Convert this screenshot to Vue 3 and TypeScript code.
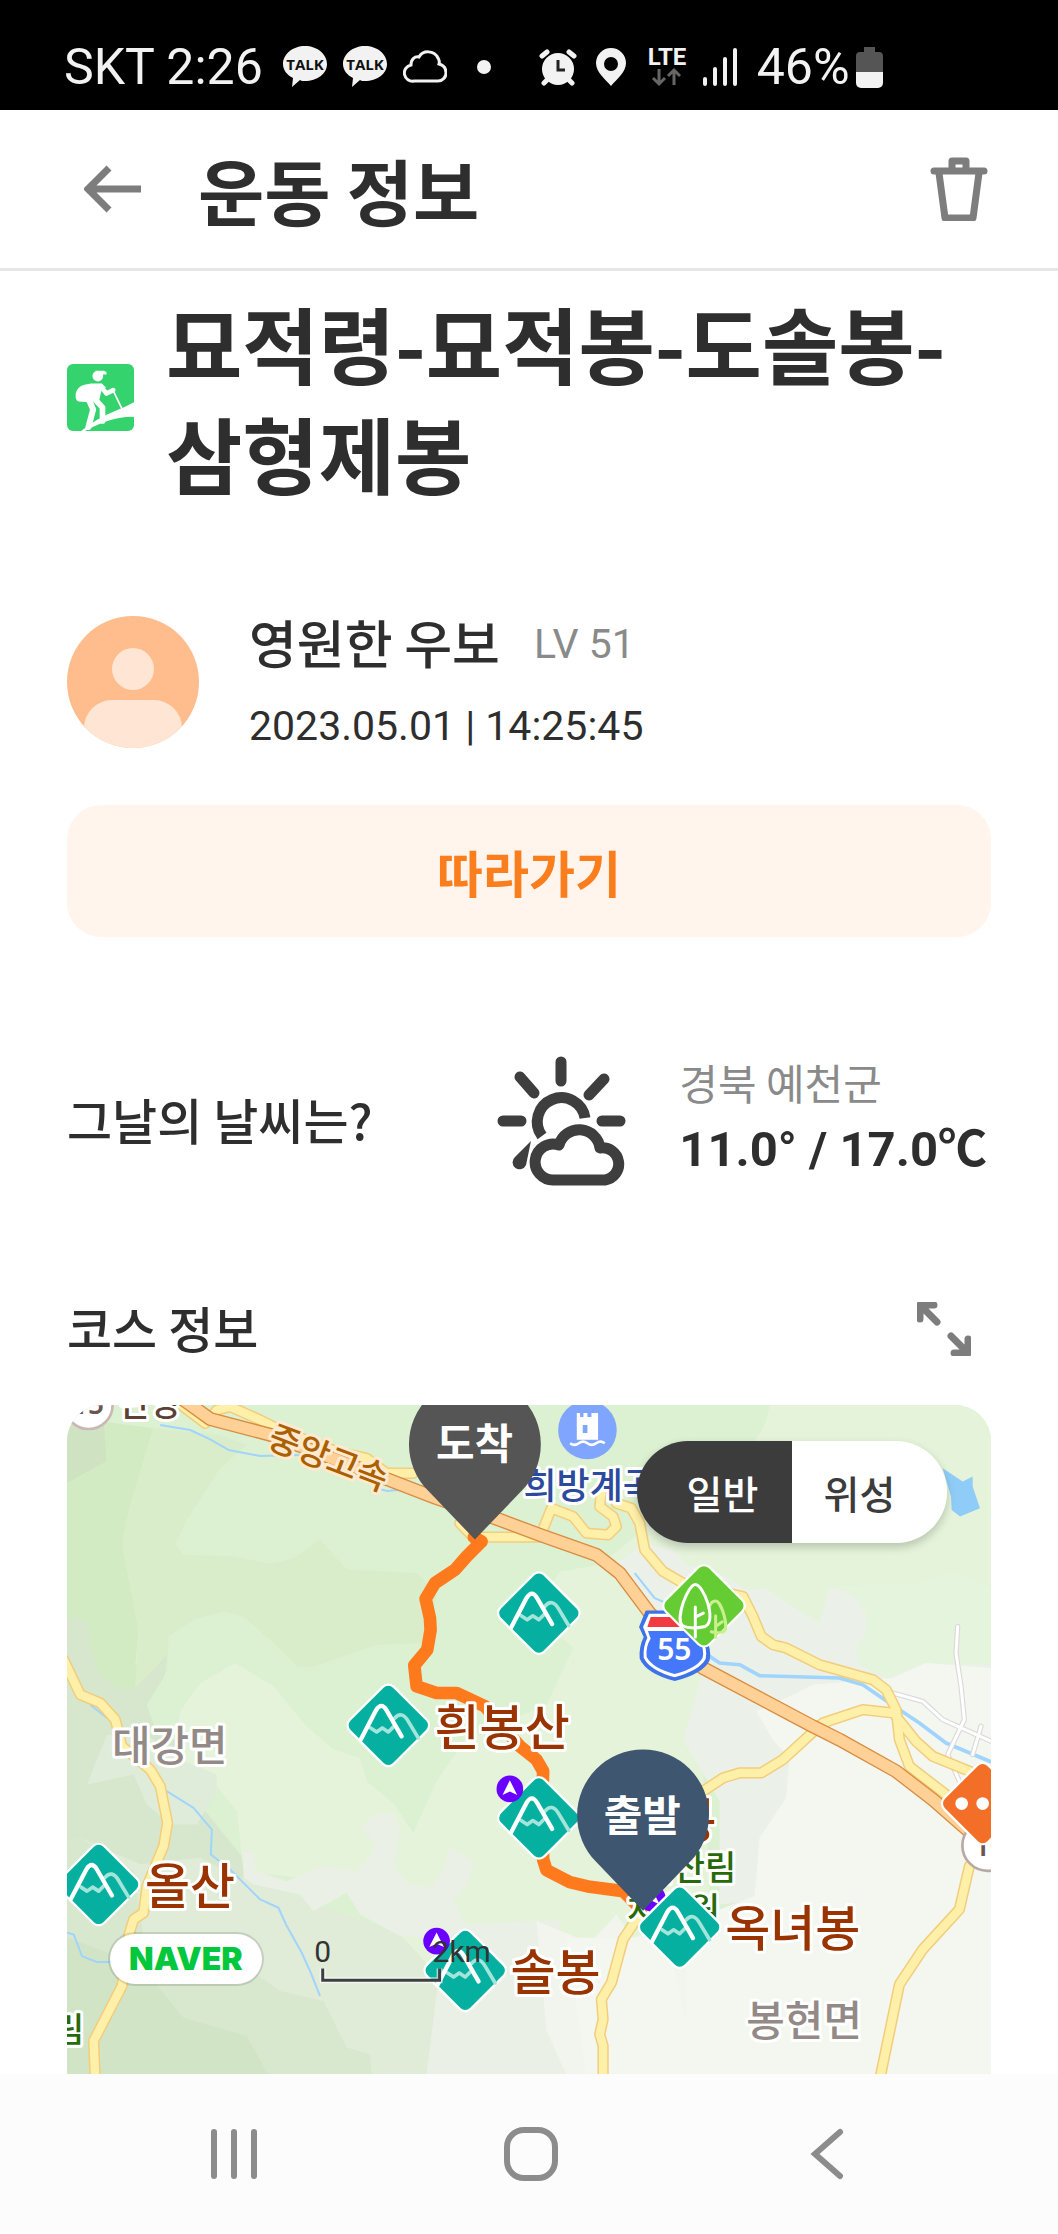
<script setup lang="ts">
import { ref } from 'vue'

interface Point {
  x: number
  y: number
}

interface Label extends Point {
  text: string
  kind: string
}

type Layer = 'normal' | 'satellite'

const layer = ref<Layer>('normal')

const layers: { id: Layer; name: string }[] = [
  { id: 'normal', name: '일반' },
  { id: 'satellite', name: '위성' },
]

const peaks: Point[] = [
  { x: 1417, y: 625 },
  { x: 965, y: 962 },
  { x: 1417, y: 1240 },
  { x: 95, y: 1440 },
  { x: 1196, y: 1698 },
]

const spots: Point[] = [
  { x: 1330, y: 1153 },
  { x: 1110, y: 1610 },
]

const minorRoads: string[] = [
  'M330-10 415 55 450 15 490 5 580 45 640 75 810 140 900 160 960 205 1040 205',
  'M1180 355 1220 397 1420 397 1455 310 1520 335 1560 385 1625 390 1650 365 1640 335 1600 305 1605 260',
  'M1650 295 1695 310 1720 355 1735 435 1790 500 1850 535 2030 575 2060 635 2085 695 2120 720 2160 730 2260 780 2420 825 2460 855 2490 915 2500 1005 2530 1085 2640 1170',
  'M2490 935 2550 1010 2600 1055 2760 1120',
  'M2480 925 2390 915 2270 955 2150 1065 2085 1105 2020 1105 1970 1120 1910 1160',
  'M1730 1515 1670 1605 1635 1735 1605 1785 1610 1845 1600 1890 1610 1925 1610 2030',
  'M2710 1385 2680 1515 2570 1635 2500 1740 2440 2030',
  'M-10 765 40 870 100 895 145 945 165 1025 250 1095 280 1145 302 1255 290 1325 240 1445 230 1525 200 1545 185 1595 165 1745 80 1910 85 2030',
]

const motorway =
  'M330-30 430 42 620 92 960 222 1110 280 1300 345 1420 390 1590 450 1660 505 1750 625 1910 790 2240 965 2320 1005 2490 1100 2600 1185 2720 1290'

const streams: string[] = [
  'M280 60 370 75 430 103 485 135 580 153 700 150',
  'M300 1160 380 1210 435 1275 432 1350 490 1395 580 1485 635 1510 660 1565 705 1645 732 1705 760 1775',
  'M0 1585 20 1590 45 1655 90 1673 130 1673',
  'M70 900 120 940',
  'M930 250 960 258 1010 254',
  'M1705 505 1765 580 1800 595',
]

const labels: Label[] = [
  { text: '흰봉산', x: 368, y: 340, kind: 'peak' },
  { text: '도솔봉', x: 515, y: 433, kind: 'peak' },
  { text: '옥녀봉', x: 659, y: 542, kind: 'peak' },
  { text: '올산', x: 78, y: 500, kind: 'peak' },
  { text: '솔봉', x: 444, y: 586, kind: 'peak' },
  { text: '대강면', x: 45, y: 356, kind: 'town' },
  { text: '봉현면', x: 680, y: 632, kind: 'town' },
  { text: '희방계곡', x: 457, y: 94, kind: 'valley' },
  { text: '단양', x: 52, y: 11, kind: 'city' },
  { text: '국립산림', x: 545, y: 476, kind: 'forest' },
  { text: '치유원', x: 560, y: 518, kind: 'forest' },
  { text: '림', x: -14, y: 638, kind: 'forest' },
]
</script>

<template>
  <div class="screen">
    <div class="status">
      <span class="status-text carrier">SKT 2:26</span>
      <svg v-for="n in 2" :key="n" class="talk" width="44" height="42" viewBox="0 0 44 42">
        <path d="M22 0C34 0 44 8 44 18S34 35 22 35c-2 0-4 0-5-1L9 41l1-9C4 29 0 24 0 18 0 8 10 0 22 0Z" fill="#f2f2f2" />
        <text x="22" y="24" text-anchor="middle" class="talk-text">TALK</text>
      </svg>
      <svg class="cloud" width="44" height="34" viewBox="0 0 44 34">
        <path d="M11 31A8 8 0 0 1 8 15C8 9 12 6 16 7 20 0 31 0 35 8c1 2 2 3 1 6 4 1 7 4 7 9a8 8 0 0 1-8 8Z" fill="none" stroke="#f2f2f2" stroke-width="3" />
      </svg>
      <i class="dot"></i>
      <svg class="alarm" width="38" height="38" viewBox="0 0 38 38">
        <g stroke="#f2f2f2" stroke-width="5" stroke-linecap="round"><path d="M3 8 8 4M30 4l5 4M9 31l-4 4M29 31l4 4" /></g>
        <circle cx="19" cy="21" r="16" fill="#f2f2f2" />
        <path d="M19 12v10h7" fill="none" stroke="#222" stroke-width="3" />
      </svg>
      <svg class="place" width="32" height="38" viewBox="0 0 32 38">
        <path d="M16 0a15 15 0 0 1 15 15c0 9-9 16-15 23C10 31 1 24 1 15A15 15 0 0 1 16 0Zm0 9a7 7 0 1 0 0 14 7 7 0 0 0 0-14Z" fill="#f2f2f2" fill-rule="evenodd" />
      </svg>
      <svg class="lte" width="40" height="40" viewBox="0 0 40 40">
        <text x="20" y="18" text-anchor="middle" class="lte-text">LTE</text>
        <path d="M12 22v15M6 31l6 6 6-6M27 38V23M21 29l6-6 6 6" fill="none" stroke="#666" stroke-width="3" />
      </svg>
      <svg class="signal" width="36" height="38" viewBox="0 0 36 38">
        <path d="M2 31v5M12 21v15M22 11v25M32 2v34" stroke="#f2f2f2" stroke-width="4" stroke-linecap="round" />
      </svg>
      <span class="status-text percent">46%</span>
      <svg class="battery" width="27" height="41" viewBox="0 0 27 41">
        <path d="M8 0h11v5h4a4 4 0 0 1 4 4v16H0V9a4 4 0 0 1 4-4h4Z" fill="#555" />
        <path d="M0 25h27v11a5 5 0 0 1-5 5H5a5 5 0 0 1-5-5Z" fill="#f2f2f2" />
      </svg>
    </div>

    <header class="bar">
      <button type="button" class="icon-button" aria-label="뒤로">
        <svg width="58" height="48" viewBox="0 0 58 48"><path d="M57 24H5M25 3 4 24l21 21" fill="none" stroke="#7d7d7d" stroke-width="7" /></svg>
      </button>
      <h1>운동 정보</h1>
      <button type="button" class="icon-button" aria-label="삭제">
        <svg width="58" height="64" viewBox="0 0 58 64">
          <g fill="none" stroke="#7d7d7d" stroke-width="7" stroke-linejoin="round" stroke-linecap="round">
            <path d="M4 14h50M9 16l6 45h28l6-45" /><path d="M22 12V4h14v8" />
          </g>
        </svg>
      </button>
    </header>

    <main>
      <section class="course">
        <svg class="hiker" width="67" height="67" viewBox="0 0 200 200">
          <rect width="200" height="200" rx="18" fill="#35d36d" />
          <g fill="#fff">
            <circle cx="92" cy="36" r="16" />
            <path d="M84 20h26l8 4v7h-20Z" />
            <path d="M72 58h32l12 12-14 12-6 28-32 4-30-2Q24 108 26 88 30 68 52 62Z" />
            <path d="M42 200Q90 162 140 142q34-14 60-28v44q-60-4-146 42Z" />
          </g>
          <g fill="none" stroke="#fff" stroke-linejoin="round" stroke-linecap="round">
            <path d="M100 66l18 22 20-10" stroke-width="14" />
            <path d="M66 108l12 28-14 52" stroke-width="18" />
            <path d="M82 104l24 26v40" stroke-width="17" />
            <path d="M140 84l26 54" stroke-width="5" />
          </g>
        </svg>
        <h2>묘적령-묘적봉-도솔봉-삼형제봉</h2>
      </section>

      <section class="user">
        <svg class="avatar" width="132" height="132" viewBox="0 0 132 132">
          <clipPath id="face"><circle cx="66" cy="66" r="66" /></clipPath>
          <g clip-path="url(#face)">
            <rect width="132" height="132" fill="#ffbc8c" />
            <circle cx="66" cy="53" r="21" fill="#ffe6d4" />
            <path d="M17 132v-20a28 28 0 0 1 28-28h42a28 28 0 0 1 28 28v20Z" fill="#ffe6d4" />
          </g>
        </svg>
        <div class="who">
          <p class="name"><strong>영원한 우보</strong><span class="level">LV 51</span></p>
          <p class="date">2023.05.01 | 14:25:45</p>
        </div>
      </section>

      <button type="button" class="follow">따라가기</button>

      <section class="weather">
        <h3>그날의 날씨는?</h3>
        <svg width="130" height="130" viewBox="0 0 130 130">
          <g fill="none" stroke="#3e3e3e" stroke-width="11" stroke-linecap="round">
            <path d="M64 6v19M23 21l14 16M107 23 92 39M6 65h18M105 65h18" />
            <path d="M88 62A24 24 0 1 0 45 80" stroke-linecap="butt" />
            <path d="M57 124A18 18 0 1 1 62 89 A21 21 0 0 1 103 92 A16 16 0 1 1 108 124Z" stroke-linejoin="round" />
          </g>
          <path d="M34 85 18 101A7 7 0 1 0 29 109Z" fill="#3e3e3e" />
        </svg>
        <div class="temps">
          <p class="region">경북 예천군</p>
          <p class="degrees">11.0° / 17.0℃</p>
        </div>
      </section>

      <section class="route">
        <div class="route-head">
          <h3>코스 정보</h3>
          <button type="button" class="icon-button" aria-label="지도 확대">
            <svg width="54" height="54" viewBox="0 0 54 54">
              <path d="M3 17V3h14M4 4l16 16M51 37v14H37M50 50 34 34" fill="none" stroke="#7d7d7d" stroke-width="7" stroke-linejoin="round" stroke-linecap="round" />
            </svg>
          </button>
        </div>

        <div class="map">
          <svg class="tiles" viewBox="0 0 925 670" role="img" aria-label="코스 지도">
            <defs>
              <g id="peak-icon">
                <rect x="-97" y="-97" width="194" height="194" rx="28" transform="rotate(45)" fill="#fff" />
                <rect x="-90" y="-90" width="180" height="180" rx="20" transform="rotate(45)" fill="#05b0a0" />
                <g fill="none" stroke-width="11" stroke-linecap="round" stroke-linejoin="round">
                  <path d="M-53 8l18 12L-18 8 0 20 16 4M18-20Q40-46 60-12L90 38" stroke="#a3e4db" />
                  <path d="M-83 43-37-45Q-21-72-5-45L40 33" stroke="#fff" stroke-width="13" />
                </g>
              </g>
              <g id="spot-icon">
                <circle r="40" fill="#6a00ff" />
                <path d="M0-26 22 18 0 8-22 18Z" fill="#fff" />
              </g>
              <path id="pin" d="M0 286-141 139A198 198 0 1 1 141 139Z" />
            </defs>

            <g transform="scale(.33333)">
              <rect width="2776" height="2012" fill="#dcf0d2" />
              <path d="M0 0H110L120 170 0 235Z" fill="#cfe3c3" />
              <path d="M0 235 120 170 110 50 260 70 190 300 165 415 195 560 215 680 205 780 300 750 200 900 0 960Z" fill="#d3ebc3" />
              <path d="M260 70 460 90 540 120 460 190 360 345 325 420 350 450 500 455 610 477 680 460 760 405 840 493 1050 505 1110 560 1090 715 930 720 740 785 695 788 620 715 530 635 470 620 380 645 305 695 300 800 205 850 215 680 165 415 190 300Z" fill="#daedcb" />
              <path d="M0 640 60 645 75 740 95 800 150 850 205 850 300 750 295 810 240 900 270 990 340 1010 400 1200 520 1350 640 1450 0 1450Z" fill="#d7e7cd" />
              <path d="M505 775 620 845 720 965 800 1035 880 1060 900 1130 980 1195 1040 1285 1110 1130 1200 1000 1440 900 1520 730 1520 1000 1900 900 1960 2010H1000L1000 1500 700 1420 530 1400 510 1220 430 1120 320 1060 340 920 400 835Z" fill="#e4f3d9" />
              <path d="M2110 0Q2100 70 2060 110L1700 400 1600 480 1480 500 1400 620 1520 730V1000L1860 1300 1860 950 2776 900V0Z" fill="#e4f3d9" />
              <path d="M240 990 330 1060 450 1110 450 1160 390 1260 310 1260 240 1200 200 1110 60 1140 120 990Z" fill="#e0ecda" />
              <path d="M0 1310 40 1300 220 1380 400 1360 520 1420 700 1480 1000 1590 1120 1720 1080 2012H0Z" fill="#e1ecd8" />
              <path d="M0 1310 40 1300 200 1400 230 1600 400 1590 640 1760 770 1790 840 1930 910 1950 915 2012H0Z" fill="#d8e8ce" />
              <path d="M0 1600 220 1680 350 1840 540 1895 605 2012H0Z" fill="#d1e4c6" />
              <path d="M530 1340 560 1340 570 1400 660 1430 770 1385 870 1400 920 1340 920 1310 880 1270 920 1230 980 1225 1000 1270 985 1390 1030 1440 1090 1450 1130 1400 1150 1325 1220 1370 1210 1430 1160 1490 1200 1560 1480 1545 1500 2012H1080L1115 1730 1100 1600 1000 1595 880 1530 840 1465 740 1520 700 1470 560 1440 530 1420Z" fill="#eaf0e6" />
              <path d="M1410 1550 1570 1615 1650 1530 1700 1600 1960 1500 1960 2012H1500L1440 1880Z" fill="#f1f5ed" />
              <path d="M1630 485 1740 415 1830 440 1860 480 1950 500 2040 555 2100 550 2180 605 2260 655 2290 545 2400 580 2776 780V1400L1960 1500 1960 1190 1850 1005 1880 900 1910 790 1800 640Z" fill="#ebf1e8" />
              <path d="M2300 545 2410 540 2560 535 2665 500 2776 550V780L2570 775 2460 820 2380 780 2370 730 2400 690 2400 620 2350 560Z" fill="#e5f4dd" />
              <path d="M2776 790 2580 775 2480 820 2240 840 2160 880 2070 920 2120 1005 2170 1060 2160 1180 2080 1300 2065 1475 1960 1515 1860 1600 1860 2012H2776Z" fill="#f3f7f0" />
              <path d="M1500 1600 1800 1600 1900 2012H1560Z" fill="#f3f7f0" />

              <g fill="none" stroke="#a0d4fc" stroke-width="6" stroke-linejoin="round">
                <path v-for="d in streams" :key="d" :d="d" />
                <path d="M1930 755 1960 775 2020 780 2080 813 2320 820 2390 840 2470 895 2560 955 2640 1015 2776 1072" stroke-width="11" />
              </g>
              <path d="M2630 190 2690 230 2720 215V245L2742 310 2682 335 2657 315 2655 275Z" fill="#8fcdf8" />

              <g fill="none" stroke-linejoin="round" stroke-linecap="round">
                <g stroke="#dcdad8" stroke-width="16">
                  <path d="M2675 665 2670 745 2685 845 2695 945 2645 1050 2680 1130M2480 865 2570 890 2630 945 2776 1010M2745 965 2720 1050" />
                </g>
                <g stroke="#fff" stroke-width="9">
                  <path d="M2675 665 2670 745 2685 845 2695 945 2645 1050 2680 1130M2480 865 2570 890 2630 945 2776 1010M2745 965 2720 1050" />
                </g>
                <g stroke="#f2cd7b" stroke-width="34"><path v-for="d in minorRoads" :key="d" :d="d" /></g>
                <g stroke="#fff0a9" stroke-width="25"><path v-for="d in minorRoads" :key="d" :d="d" /></g>
                <path :d="motorway" stroke="#d98d40" stroke-width="42" />
                <path :d="motorway" stroke="#ffd196" stroke-width="34" />
                <path
                  d="M1222 397 1245 410 1200 455 1165 495 1105 535 1077 582 1090 640 1092 675 1082 735 1043 782 1050 845 1110 865 1170 865 1255 905 1360 1025 1410 1065 1430 1100 1427 1200 1430 1365 1440 1397 1510 1433 1570 1447 1670 1460 1725 1515"
                  stroke="#ff7a1c" stroke-width="38"
                />
              </g>

              <circle cx="65" cy="0" r="72" fill="#fff" stroke="#c9b8b4" stroke-width="8" />
              <circle cx="2765" cy="1323" r="76" fill="#fff" stroke="#b9a8a4" stroke-width="8" />
              <circle cx="1563" cy="75" r="88" fill="#80a5ff" />
              <path d="M1531 24h10v12h10V24h12v12h12V24h10l10 0v80h-64Zm18 36v24h14V60Z" fill="#fff" fill-rule="evenodd" />
              <path d="M1511 115q13 10 26 0t26 0 26 0 26 0" fill="none" stroke="#fff" stroke-width="8" />

              <g transform="translate(1825 717)">
                <path d="M-87-100H87L107-50 93-20Q112 20 105 50 85 90 0 112-85 90-105 45-108 10-93-20L-107-50Z" fill="#3d72e8" />
                <path d="M-77-90H77L95-50 82-18Q100 20 93 46 75 80 0 101-75 80-93 42-96 10-82-18L-95-50Z" fill="#fff" />
                <path d="M-80-38H80Q76-24 74-16 90 20 84 42 66 74 0 91-66 74-84 40-88 10-72-16-76-24-80-38Z" fill="#4577fa" />
                <path d="M-72-80H72L82-50H-82Z" fill="#f23a43" />
              </g>
            </g>

            <text x="608" y="255" text-anchor="middle" class="shield">55</text>
            <text x="21" y="9" text-anchor="middle" class="road-number">15</text>
            <text x="924" y="451" text-anchor="middle" class="road-number">10</text>
            <text v-for="l in labels" :key="l.text" :x="l.x" :y="l.y" :class="['label', l.kind]">{{ l.text }}</text>
            <text transform="translate(199 42) rotate(21)" class="label highway">중앙고속</text>

            <g transform="scale(.33333)">
              <use v-for="p in peaks" :key="`${p.x}-${p.y}`" href="#peak-icon" :x="p.x" :y="p.y" />
              <g transform="translate(1913 603)">
                <rect x="-97" y="-97" width="194" height="194" rx="28" transform="rotate(45)" fill="#fff" />
                <rect x="-90" y="-90" width="180" height="180" rx="20" transform="rotate(45)" fill="#66cc33" />
                <g fill="none" stroke-width="9" stroke-linecap="round">
                  <path d="M15 8Q20-14 35-14C52-14 78 70 58 78Q45 84 22 78M35 30v65M35 62l20-14" stroke="#c9f08f" />
                  <path d="M-26-64C-48-64-88 40-64 60Q-40 72 4 62C40 45-2-64-26-64ZM-26 4v90M-26 34-2 22" stroke="#fff" />
                </g>
              </g>
              <g transform="translate(2750 1197)">
                <rect x="-97" y="-97" width="194" height="194" rx="28" transform="rotate(45)" fill="#fff" />
                <rect x="-90" y="-90" width="180" height="180" rx="20" transform="rotate(45)" fill="#f36f28" />
                <circle cx="-63" r="19" fill="#fff" /><circle r="19" fill="#fff" />
              </g>
              <use v-for="s in spots" :key="`${s.x}-${s.y}`" href="#spot-icon" :x="s.x" :y="s.y" />
              <use href="#spot-icon" x="1758" y="1482" />
              <use href="#peak-icon" x="1840" y="1568" />
              <use href="#pin" x="1225" y="118" fill="#555" />
              <use href="#pin" x="1730" y="1233" fill="#3e566f" />
            </g>
            <text x="408" y="54" text-anchor="middle" class="pin-text">도착</text>
            <text x="576" y="426" text-anchor="middle" class="pin-text">출발</text>

            <path d="M256 564v12h117v-12" fill="none" stroke="#fff" stroke-opacity=".6" stroke-width="6" />
            <path d="M256 564v12h117v-12" fill="none" stroke="#3c4043" stroke-width="3" />
            <text x="256" y="558" text-anchor="middle" class="scale">0</text>
            <text x="366" y="558" class="scale">2km</text>
          </svg>

          <a class="naver" href="#">NAVER</a>
          <div class="toggle">
            <button
              v-for="l in layers" :key="l.id" type="button"
              :class="{ active: layer === l.id }" :aria-pressed="layer === l.id" @click="layer = l.id"
            >{{ l.name }}</button>
          </div>
        </div>
      </section>
    </main>

    <nav class="keys">
      <button type="button" class="icon-button" aria-label="최근 앱">
        <svg width="54" height="54" viewBox="0 0 54 54"><path d="M7 5v44M27 5v44M47 5v44" stroke="#8c8c8c" stroke-width="6" stroke-linecap="round" /></svg>
      </button>
      <button type="button" class="icon-button" aria-label="홈">
        <svg width="54" height="54" viewBox="0 0 54 54"><rect x="3" y="3" width="48" height="48" rx="17" fill="none" stroke="#8c8c8c" stroke-width="6" /></svg>
      </button>
      <button type="button" class="icon-button" aria-label="이전">
        <svg width="54" height="54" viewBox="0 0 54 54"><path d="M40 5 15 27l25 22" fill="none" stroke="#8c8c8c" stroke-width="6" stroke-linecap="round" /></svg>
      </button>
    </nav>
  </div>
</template>

<style>
body {
  margin: 0;
  background: #fff;
}
</style>

<style scoped>
.screen {
  font-family: 'Noto Sans CJK KR', 'Noto Sans', sans-serif;
  color: #2e2e2e;
}

h1, h2, h3, p {
  margin: 0;
}

svg {
  display: block;
  flex: none;
}

button {
  font-family: inherit;
  border: 0;
  margin: 0;
  padding: 0;
  cursor: pointer;
}

.icon-button {
  background: none;
}

.status {
  display: flex;
  align-items: center;
  box-sizing: border-box;
  height: 110px;
  padding: 24px 64px 0;
  background: #000;
}

.status-text {
  font: 400 50px/56px Roboto, sans-serif;
  color: #f2f2f2;
  white-space: nowrap;
}

.carrier {
  margin-right: 4px;
}

.talk {
  margin-left: 16px;
}

.talk-text {
  font: 700 15px 'Open Sans', sans-serif;
  fill: #111;
}

.cloud {
  margin-left: 16px;
}

.dot {
  width: 14px;
  height: 14px;
  margin-left: 30px;
  border-radius: 50%;
  background: #f2f2f2;
}

.alarm {
  margin-left: 48px;
}

.place {
  margin-left: 18px;
}

.lte {
  margin-left: 20px;
}

.lte-text {
  font: 700 24px Roboto, sans-serif;
  fill: #f2f2f2;
}

.signal {
  margin-left: 16px;
}

.percent {
  margin-left: 18px;
}

.battery {
  margin-left: 6px;
}

.bar {
  display: flex;
  align-items: center;
  box-sizing: border-box;
  height: 161px;
  padding: 0 70px 0 84px;
  border-bottom: 3px solid #e6e6e6;
}

.bar h1 {
  flex: 1;
  margin-left: 56px;
  font-size: 72px;
  line-height: 104px;
  font-weight: 700;
}

main {
  padding: 0 67px;
}

.course {
  display: flex;
  align-items: center;
  gap: 32px;
  padding-top: 16px;
}

.course h2 {
  flex: 1;
  font-size: 83px;
  line-height: 110px;
  font-weight: 700;
  word-break: keep-all;
}

.user {
  display: flex;
  align-items: center;
  gap: 50px;
  margin-top: 91px;
}

.name {
  display: flex;
  align-items: center;
  gap: 34px;
  font-size: 52px;
  line-height: 88px;
}

.name strong {
  font-weight: 500;
}

.level {
  padding-top: 4px;
  font: 400 41px/84px Roboto, sans-serif;
  color: #8a8a8a;
}

.date {
  font: 400 41px/80px Roboto, sans-serif;
}

.follow {
  display: block;
  width: 100%;
  height: 132px;
  margin-top: 39px;
  border-radius: 34px;
  background: #fff5ec;
  color: #fa7d1e;
  font-size: 50px;
  font-weight: 700;
}

.weather {
  display: flex;
  align-items: center;
  margin-top: 116px;
  padding-right: 4px;
}

h3 {
  flex: 1;
  font-size: 49px;
  line-height: 68px;
  padding-bottom: 4px;
  font-weight: 500;
}

.temps {
  margin-left: 52px;
}

.region {
  font-size: 42px;
  line-height: 58px;
  color: #8a8a8a;
}

.degrees {
  font: 700 49px/78px Roboto, 'Noto Sans CJK KR', sans-serif;
  white-space: nowrap;
}

.route {
  margin-top: 104px;
}

.route-head {
  display: flex;
  align-items: center;
  padding-right: 20px;
}

.map {
  position: relative;
  margin-top: 40px;
  border-radius: 36px 36px 0 0;
  overflow: hidden;
}

.tiles {
  width: 100%;
  height: auto;
}

.label {
  font-weight: 500;
  paint-order: stroke;
  stroke: #fff;
  stroke-width: 6px;
  stroke-linejoin: round;
}

.peak {
  font-size: 49px;
  fill: #993300;
}

.town {
  font-size: 42px;
  fill: #938a87;
}

.valley {
  font-size: 36px;
  fill: #2c4a9e;
}

.city {
  font-size: 34px;
  fill: #5c4033;
}

.forest {
  font-size: 34px;
  fill: #266a0a;
}

.highway {
  font-size: 34px;
  fill: #aa6000;
  stroke: #ffe9cf;
}

.shield {
  font: 600 30px 'Noto Sans', sans-serif;
  fill: #fff;
}

.road-number {
  font: 600 28px 'Noto Sans', sans-serif;
  fill: #6b5550;
}

.pin-text {
  font-size: 42px;
  font-weight: 700;
  fill: #fff;
}

.scale {
  font: 400 30px Roboto, sans-serif;
  fill: #333;
}

.naver {
  position: absolute;
  left: 43px;
  bottom: 90px;
  padding: 0 19px;
  border-radius: 25px;
  background: #fff;
  box-shadow: 0 0 0 2px rgba(0, 0, 0, 0.12);
  color: #03c73c;
  font: 900 32px/50px Inter, sans-serif;
  text-decoration: none;
}

.toggle {
  position: absolute;
  top: 36px;
  right: 44px;
  display: flex;
  border-radius: 51px;
  overflow: hidden;
  box-shadow: 0 4px 10px rgba(0, 0, 0, 0.2);
}

.toggle button {
  width: 155px;
  height: 102px;
  padding-right: 20px;
  background: #fff;
  color: #3c3c3c;
  font-size: 39px;
  font-weight: 500;
}

.toggle .active {
  padding: 0 0 0 16px;
  background: #3c3c3c;
  color: #fff;
}

.keys {
  display: flex;
  justify-content: space-between;
  align-items: center;
  box-sizing: border-box;
  height: 159px;
  padding: 0 204px 0 207px;
  background: #fcfcfc;
}
</style>
